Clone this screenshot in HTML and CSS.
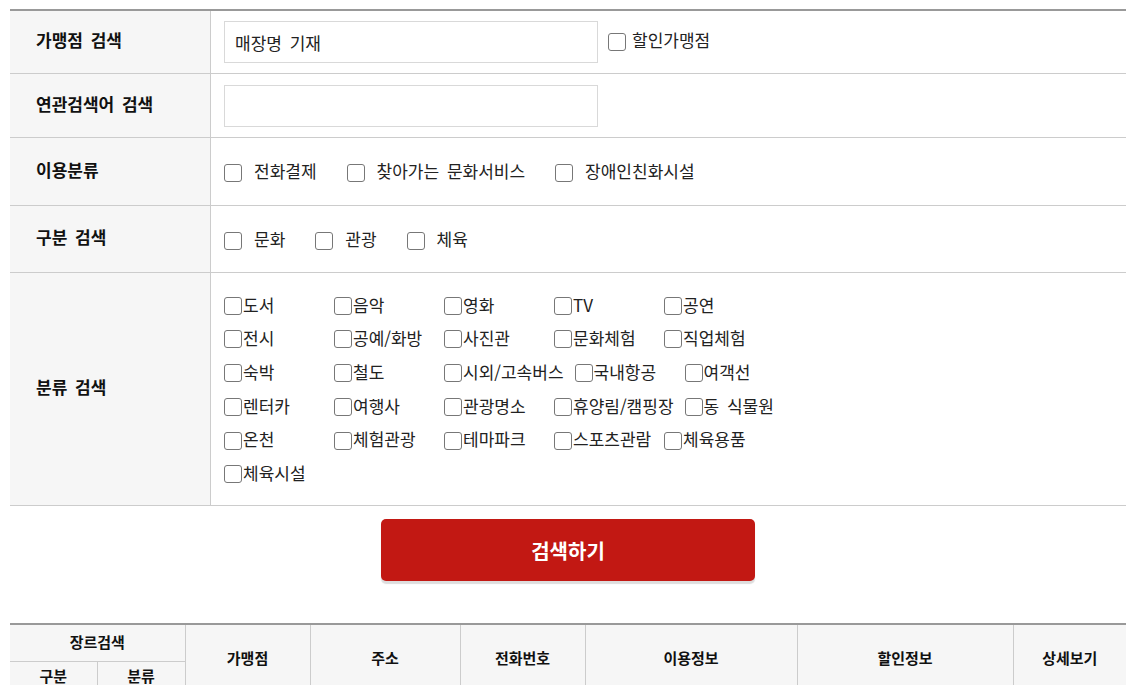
FILE: index.html
```html
<!DOCTYPE html>
<html lang="ko">
<head>
    <meta charset="UTF-8">
    <meta name="viewport" content="width=device-width, initial-scale=1.0">
    <title>가맹점 검색</title>
    <link rel="stylesheet" href="styles.css">
</head>
<body>
    <div class="page">
        <div class="search-box">
            <!-- 가맹점 검색 -->
            <div class="search-row row-store">
                <div class="row-label">가맹점 검색</div>
                <div class="row-field">
                    <input type="text" class="text-input" value="매장명 기재">
                    <label class="check check-discount"><input type="checkbox"><span>할인가맹점</span></label>
                </div>
            </div>
            <!-- 연관검색어 -->
            <div class="search-row row-keyword">
                <div class="row-label">연관검색어 검색</div>
                <div class="row-field">
                    <input type="text" class="text-input">
                </div>
            </div>
            <!-- 이용분류 -->
            <div class="search-row row-use">
                <div class="row-label">이용분류</div>
                <div class="row-field">
                    <label class="check check-wide"><input type="checkbox"><span>전화결제</span></label>
                    <label class="check check-wide"><input type="checkbox"><span>찾아가는 문화서비스</span></label>
                    <label class="check check-wide"><input type="checkbox"><span>장애인친화시설</span></label>
                </div>
            </div>
            <!-- 구분 검색 -->
            <div class="search-row row-type">
                <div class="row-label">구분 검색</div>
                <div class="row-field">
                    <label class="check check-wide"><input type="checkbox"><span>문화</span></label>
                    <label class="check check-wide"><input type="checkbox"><span>관광</span></label>
                    <label class="check check-wide"><input type="checkbox"><span>체육</span></label>
                </div>
            </div>
            <!-- 분류 검색 -->
            <div class="search-row row-cate">
                <div class="row-label">분류 검색</div>
                <div class="row-field cate-field">
                    <div class="cate-line">
                        <label class="check cate-item"><input type="checkbox"><span>도서</span></label>
                        <label class="check cate-item"><input type="checkbox"><span>음악</span></label>
                        <label class="check cate-item"><input type="checkbox"><span>영화</span></label>
                        <label class="check cate-item"><input type="checkbox"><span>TV</span></label>
                        <label class="check cate-item"><input type="checkbox"><span>공연</span></label>
                    </div>
                    <div class="cate-line">
                        <label class="check cate-item"><input type="checkbox"><span>전시</span></label>
                        <label class="check cate-item"><input type="checkbox"><span>공예/화방</span></label>
                        <label class="check cate-item"><input type="checkbox"><span>사진관</span></label>
                        <label class="check cate-item"><input type="checkbox"><span>문화체험</span></label>
                        <label class="check cate-item"><input type="checkbox"><span>직업체험</span></label>
                    </div>
                    <div class="cate-line">
                        <label class="check cate-item"><input type="checkbox"><span>숙박</span></label>
                        <label class="check cate-item"><input type="checkbox"><span>철도</span></label>
                        <label class="check cate-item"><input type="checkbox"><span>시외/고속버스</span></label>
                        <label class="check cate-item"><input type="checkbox"><span>국내항공</span></label>
                        <label class="check cate-item"><input type="checkbox"><span>여객선</span></label>
                    </div>
                    <div class="cate-line">
                        <label class="check cate-item"><input type="checkbox"><span>렌터카</span></label>
                        <label class="check cate-item"><input type="checkbox"><span>여행사</span></label>
                        <label class="check cate-item"><input type="checkbox"><span>관광명소</span></label>
                        <label class="check cate-item"><input type="checkbox"><span>휴양림/캠핑장</span></label>
                        <label class="check cate-item"><input type="checkbox"><span>동 식물원</span></label>
                    </div>
                    <div class="cate-line">
                        <label class="check cate-item"><input type="checkbox"><span>온천</span></label>
                        <label class="check cate-item"><input type="checkbox"><span>체험관광</span></label>
                        <label class="check cate-item"><input type="checkbox"><span>테마파크</span></label>
                        <label class="check cate-item"><input type="checkbox"><span>스포츠관람</span></label>
                        <label class="check cate-item"><input type="checkbox"><span>체육용품</span></label>
                    </div>
                    <div class="cate-line">
                        <label class="check cate-item"><input type="checkbox"><span>체육시설</span></label>
                    </div>
                </div>
            </div>
        </div>

        <div class="btn-area">
            <button type="button" class="btn-search">검색하기</button>
        </div>

        <table class="result-table">
            <colgroup>
                <col style="width:87px">
                <col style="width:88px">
                <col style="width:125px">
                <col style="width:150px">
                <col style="width:125px">
                <col style="width:212px">
                <col style="width:216px">
                <col style="width:113px">
            </colgroup>
            <thead>
                <tr class="head-top">
                    <th colspan="2" class="edge-left">장르검색</th>
                    <th rowspan="2">가맹점</th>
                    <th rowspan="2">주소</th>
                    <th rowspan="2">전화번호</th>
                    <th rowspan="2">이용정보</th>
                    <th rowspan="2">할인정보</th>
                    <th rowspan="2" class="edge-right">상세보기</th>
                </tr>
                <tr class="head-sub">
                    <th class="edge-left">구분</th>
                    <th>분류</th>
                </tr>
            </thead>
        </table>
    </div>
</body>
</html>
```

FILE: styles.css
```css
* {
    box-sizing: border-box;
}

body {
    margin: 0;
    font-family: "Noto Sans CJK KR", sans-serif;
    font-size: 17px;
    line-height: 1.3;
    word-spacing: 3px;
    color: #222;
    background-color: #fff;
}

.page {
    width: 1126px;
    padding: 9px 0 0 10px;
}

/* search form */
.search-box {
    border-top: 2px solid #999;
}

.search-row {
    display: flex;
    border-bottom: 1px solid #ccc;
}

.row-store { height: 63px; }
.row-keyword { height: 64px; }
.row-use { height: 68px; }
.row-type { height: 67px; }
.row-cate { height: 233px; }

.row-label {
    width: 201px;
    padding-left: 26px;
    padding-bottom: 3px;
    background-color: #f6f6f6;
    border-right: 1px solid #ccc;
    display: flex;
    align-items: center;
    font-weight: bold;
    color: #111;
}

.row-field {
    flex: 1;
    display: flex;
    align-items: center;
    padding-left: 13px;
}

.text-input {
    width: 374px;
    height: 42px;
    border: 1px solid #d9d9d9;
    padding: 0 10px;
    font-family: inherit;
    font-size: 17px;
    word-spacing: 3px;
    color: #222;
    outline: none;
}

.check {
    display: flex;
    align-items: center;
    cursor: pointer;
}

.check input {
    appearance: none;
    -webkit-appearance: none;
    width: 18px;
    height: 18px;
    margin: 0;
    border: 1px solid #777;
    border-radius: 3px;
    background-color: #fff;
    flex-shrink: 0;
}

.check input:checked {
    background-color: #c21813;
    border-color: #c21813;
}

.check-discount {
    margin-left: 10px;
}

.check-discount span {
    margin-left: 6px;
    margin-top: -4px;
}

.check-wide {
    margin-right: 30px;
}

.check-wide input {
    margin-top: 3px;
}

.check-wide span {
    margin-left: 12px;
}

.cate-field {
    flex-direction: column;
    align-items: flex-start;
    justify-content: center;
}

.cate-line {
    display: flex;
    height: 33.7px;
    align-items: center;
}

.cate-item {
    min-width: 99px;
    margin-right: 11px;
}

.cate-item input {
    margin-top: 2px;
    margin-right: 1px;
}

/* button */
.btn-area {
    display: flex;
    justify-content: center;
    padding-top: 13px;
}

.btn-search {
    width: 374px;
    height: 62px;
    background-color: #c21813;
    color: #fff;
    font-family: inherit;
    font-size: 20px;
    font-weight: bold;
    border: none;
    border-radius: 5px;
    box-shadow: 0 3px 1px #ddd;
    cursor: pointer;
}

/* result table */
.result-table {
    width: 1116px;
    margin-top: 42px;
    border-collapse: collapse;
    border-top: 2px solid #999;
    table-layout: fixed;
}

.result-table th {
    background-color: #f6f6f6;
    border: 1px solid #ccc;
    font-size: 15px;
    font-weight: bold;
    color: #111;
    padding: 0 0 2px;
}

.head-top th {
    border-top: none;
}

.head-top {
    height: 37px;
}

.head-sub {
    height: 31px;
}

.result-table .edge-left {
    border-left: none;
}

.result-table .edge-right {
    border-right: none;
}
```
